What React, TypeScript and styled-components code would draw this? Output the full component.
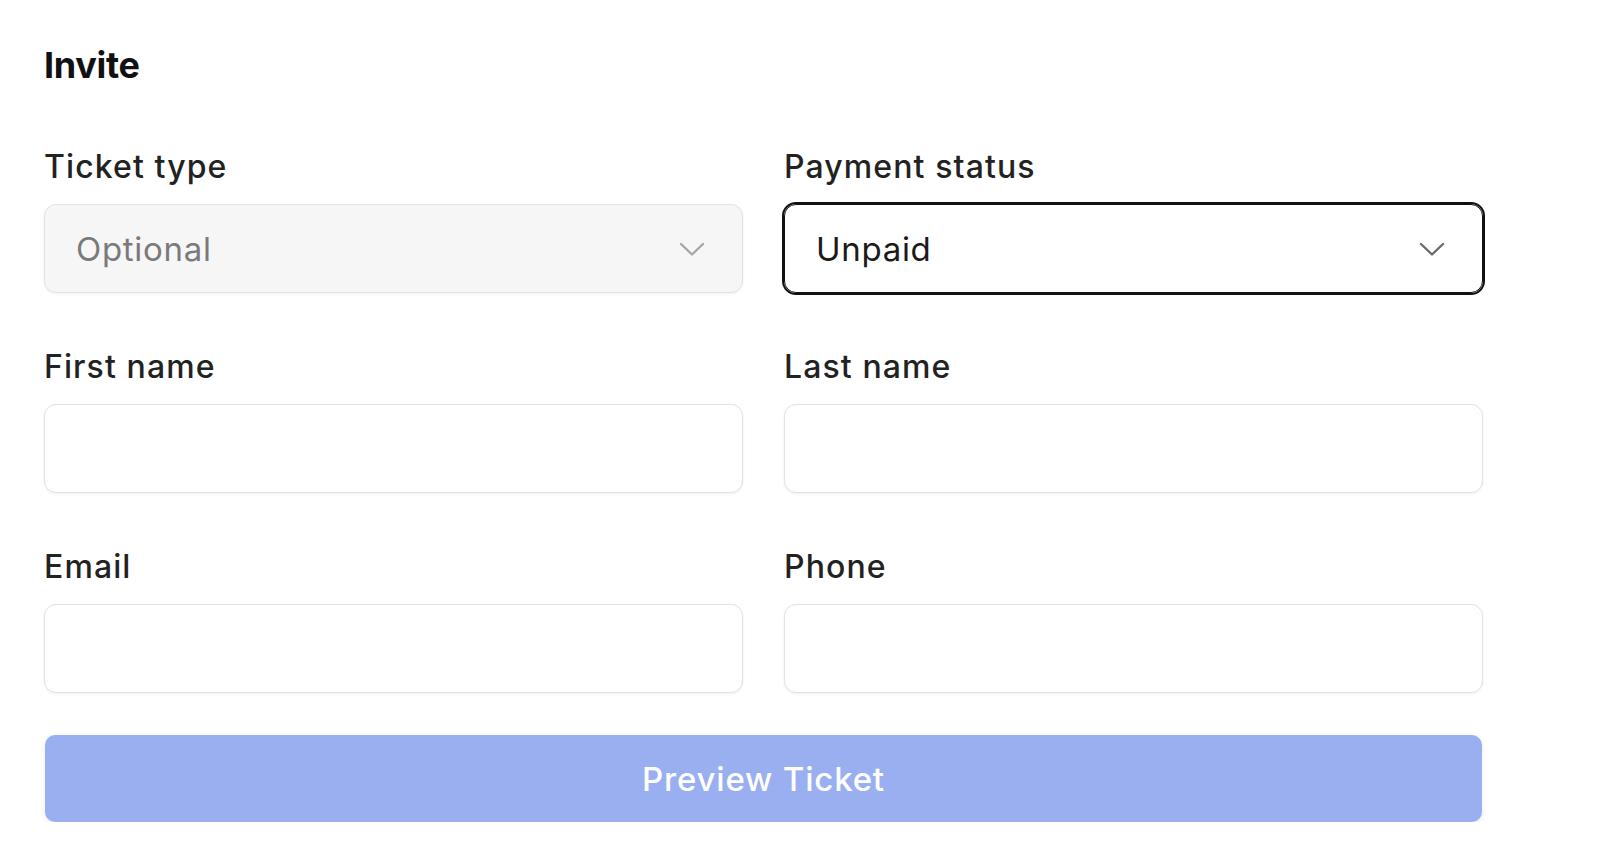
import React from "react";
import styled, { createGlobalStyle } from "styled-components";

const Global = createGlobalStyle`
  html, body { margin: 0; padding: 0; background: #ffffff; }
  body { font-family: Inter, "Noto Sans", "Liberation Sans", sans-serif; color: #1f1f1f; }
  * { box-sizing: border-box; }
`;

const Page = styled.div`
  padding: 43px 0 0 44px;
  width: 1602px;
`;

const Title = styled.h1`
  margin: 0 0 61px;
  font-size: 36px;
  line-height: 44px;
  font-weight: 700;
  color: #111;
  letter-spacing: -0.3px;
`;

const Grid = styled.div`
  display: grid;
  grid-template-columns: 699px 699px;
  column-gap: 41px;
  row-gap: 55px;
`;

const Field = styled.div`
  display: flex;
  flex-direction: column;
  gap: 19px;
`;

const Label = styled.label`
  font-size: 32px;
  line-height: 37px;
  font-weight: 500;
  letter-spacing: 1.1px;
  color: #222;
`;

const Box = styled.div<{ $disabled?: boolean; $focused?: boolean }>`
  height: 89px;
  border-radius: 12px;
  border: 1.5px solid #e2e2e2;
  background: ${(p) => (p.$disabled ? "#f6f6f6" : "#ffffff")};
  box-shadow: 0 1px 3px rgba(0, 0, 0, 0.06);
  display: flex;
  align-items: center;
  padding: 0 37px 0 31px;
  justify-content: space-between;
  ${(p) => (p.$focused ? "outline: 2.5px solid #111; outline-offset: 0px; border-color: #111;" : "")}
`;

const Value = styled.span<{ $muted?: boolean }>`
  font-size: 33px;
  letter-spacing: 0.7px;
  color: ${(p) => (p.$muted ? "#7a7a7a" : "#1a1a1a")};
`;

const Button = styled.button`
  grid-column: 1 / span 2;
  margin-top: -13px;
  height: 87px;
  width: 1437px;
  margin-left: 1px;
  border: none;
  border-radius: 10px;
  background: #9aaff0;
  color: #ffffff;
  font-family: inherit;
  font-size: 33px;
  font-weight: 500;
  letter-spacing: 0.8px;
  box-shadow: 0 2px 6px rgba(0, 0, 0, 0.08);
`;

const Chevron = ({ color }: { color: string }) => (
  <svg width="26" height="16" viewBox="0 0 26 16" fill="none">
    <path d="M2 3 L13 13.5 L24 3" stroke={color} strokeWidth="2.4" strokeLinecap="round" strokeLinejoin="round" />
  </svg>
);

export default function App() {
  return (
    <Page>
      <Global />
      <Title>Invite</Title>
      <Grid>
        <Field>
          <Label>Ticket type</Label>
          <Box $disabled>
            <Value $muted>Optional</Value>
            <Chevron color="#a6a6a6" />
          </Box>
        </Field>
        <Field>
          <Label>Payment status</Label>
          <Box $focused>
            <Value>Unpaid</Value>
            <Chevron color="#6b6b6b" />
          </Box>
        </Field>
        <Field>
          <Label>First name</Label>
          <Box />
        </Field>
        <Field>
          <Label>Last name</Label>
          <Box />
        </Field>
        <Field>
          <Label>Email</Label>
          <Box />
        </Field>
        <Field>
          <Label>Phone</Label>
          <Box />
        </Field>
        <Button>Preview Ticket</Button>
      </Grid>
    </Page>
  );
}
